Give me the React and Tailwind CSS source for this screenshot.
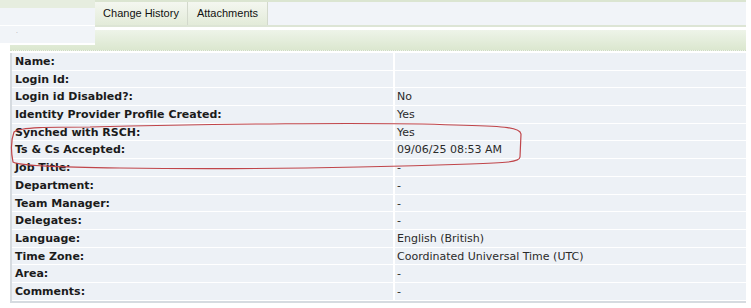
const rows = [
  ['Name:', ''],
  ['Login Id:', ''],
  ['Login id Disabled?:', 'No'],
  ['Identity Provider Profile Created:', 'Yes'],
  ['Synched with RSCH:', 'Yes'],
  ['Ts & Cs Accepted:', '09/06/25 08:53 AM'],
  ['Job Title:', '-'],
  ['Department:', '-'],
  ['Team Manager:', '-'],
  ['Delegates:', '-'],
  ['Language:', 'English (British)'],
  ['Time Zone:', 'Coordinated Universal Time (UTC)'],
  ['Area:', '-'],
  ['Comments:', '-'],
];

const tabs = [
  { label: 'Change History', w: 'w-[93px]' },
  { label: 'Attachments', w: 'w-[80px]' },
];

export default function App() {
  return (
    <div className="relative w-[751px] h-[308px] overflow-hidden bg-white font-['DejaVu_Sans',sans-serif]">
      {/* top strip */}
      <div className="h-[2px] mr-[5px] bg-[#dbe5d1]" />

      {/* tab bar */}
      <div className="flex h-[25px] ml-[95px] mr-[5px] bg-[#f1f4f8] border-b-[2px] border-[#dde5d5]">
        {tabs.map((t) => (
          <div
            key={t.label}
            className={`${t.w} flex items-center justify-center h-full border-r border-[#d3d9cc] bg-gradient-to-b from-[#f4f7f0] to-[#e3ebd9] text-[11px] text-[#111] font-['Liberation_Sans',Arial,sans-serif]`}
          >
            {t.label}
          </div>
        ))}
      </div>

      {/* green section header */}
      <div className="mt-[3px] ml-[10px] mr-[5px] h-[21px] bg-gradient-to-b from-[#eef4e9] to-[#dbe7cf] border-b border-dotted border-[#cfdcc3]" />

      {/* details table */}
      <div className="mt-[2px] ml-[10px] mr-[5px] border-l-[2px] border-b-[2px] border-[#d6dbe0]">
        {rows.map(([label, value]) => (
          <div key={label} className="flex h-[17.7px] border-b border-white bg-[#edf1f6] text-[11px] leading-[17px]">
            <div className="w-[383px] pl-[3px] font-bold text-[#1b1b1b] border-r-[2px] border-white whitespace-nowrap">
              {label}
            </div>
            <div className="flex-1 pl-[2px] text-[#2a2a2a] whitespace-nowrap">{value}</div>
          </div>
        ))}
      </div>

      {/* left dropdown panel lying over the page */}
      <div className="absolute left-0 top-0 w-[95px] h-[45px] bg-white">
        <div className="h-[8px] bg-[#e6eddf]" />
        <div className="h-[17px] bg-[#f1f4f8]" />
        <div className="h-[1px] bg-white" />
        <div className="h-[17px] bg-[#f1f4f8] pl-[16px] text-[6px] leading-[10px] text-[#999]">.</div>
      </div>

      {/* red hand-drawn annotation */}
      <svg className="absolute left-0 top-0 pointer-events-none" width="751" height="308">
        <path
          d="M 90 127 C 200 124, 380 122, 455 125 C 500 126, 520 127, 521 134 L 520 157 C 520 162, 505 163, 470 164 C 380 167, 250 170, 120 168 C 60 167, 20 166, 13 162 C 11 152, 11 140, 14 132 C 20 127, 50 127, 90 127 Z"
          fill="none"
          stroke="#c0454a"
          strokeWidth="1.2"
        />
      </svg>
    </div>
  );
}
